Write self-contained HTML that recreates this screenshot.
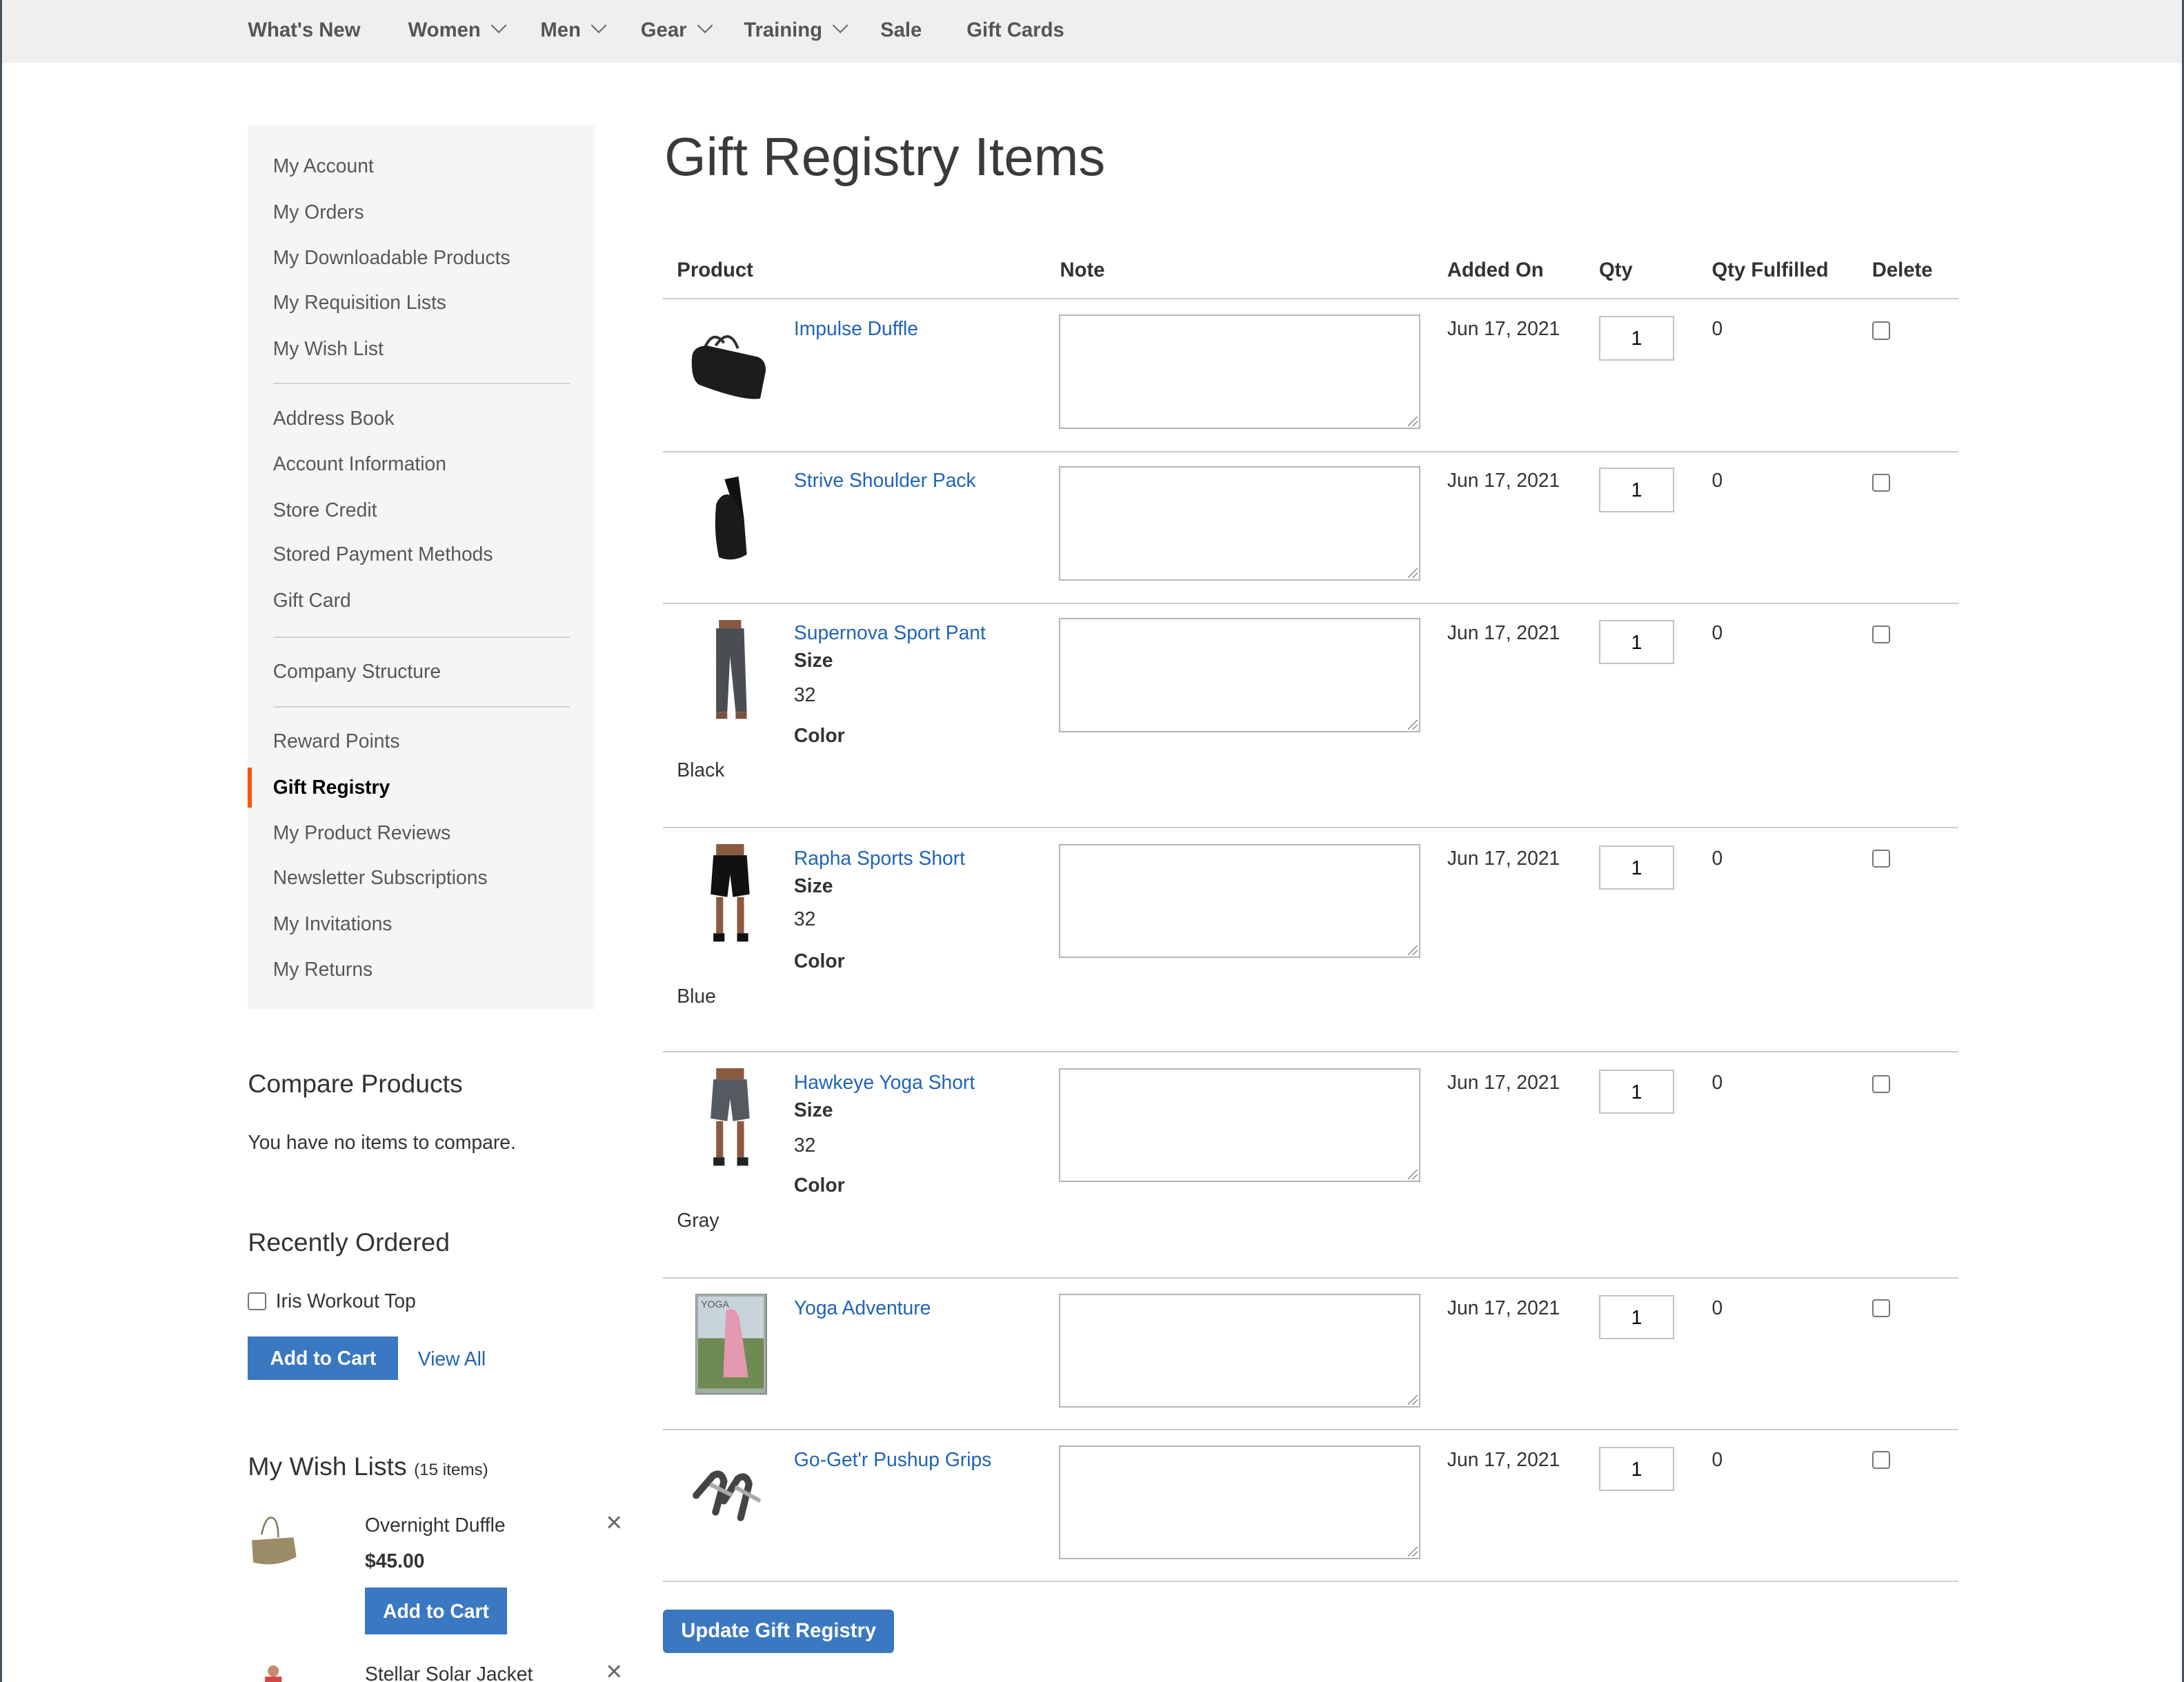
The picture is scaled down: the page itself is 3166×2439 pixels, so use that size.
<!DOCTYPE html>
<html><head><meta charset="utf-8">
<style>
html,body{margin:0;padding:0;background:#fff;overflow:hidden}
#w{position:relative;width:1568px;height:1208px;zoom:2.01913;font-family:"Liberation Sans",sans-serif;color:#333;font-size:14px}
.a{position:absolute;white-space:nowrap;line-height:18px}
.nav{position:absolute;left:0;top:0;width:1568px;height:45px;background:#efefef}
.ni{position:absolute;top:13px;font-weight:bold;color:#555;font-size:14.5px;line-height:18px}
.chev{display:inline-block;width:7px;height:7px;border-right:1.3px solid #666;border-bottom:1.3px solid #666;transform:rotate(45deg);margin-left:9px;position:relative;top:-4px}
.side{position:absolute;left:178px;top:90px;width:249px;height:635px;background:#f5f5f5}
.si{position:absolute;left:196px;color:#575757;font-size:14px;line-height:18px}
.div{position:absolute;left:196px;width:213px;height:1px;background:#d1d1d1}
.h2{position:absolute;left:178px;font-size:18.5px;font-weight:300;color:#333;line-height:24px}
.btn{position:absolute;background:#3a78c1;color:#fff;font-weight:bold;font-size:14px;text-align:center}
.link{color:#1f64b5}
.th{position:absolute;top:185px;font-weight:bold;font-size:14.5px;color:#333;line-height:18px}
.hr{position:absolute;left:476px;width:930px;height:1px;background:#ccc}
.ta{position:absolute;left:760px;width:258px;height:80px;border:1px solid #b4b4b4;background:#fff}
.ta:after{content:"";position:absolute;right:1px;bottom:1px;width:7px;height:7px;background:linear-gradient(135deg,transparent 45%,#888 46%,#888 52%,transparent 53%,transparent 70%,#888 71%,#888 77%,transparent 78%)}
.qty{position:absolute;left:1148px;width:52px;height:30px;border:1px solid #c2c2c2;text-align:center;line-height:30px;font-size:14px;color:#000}
.cb{position:absolute;width:11px;height:11px;border:1px solid #767676;border-radius:2px;background:#fff}
.b{font-weight:bold}
</style></head><body><div id="w">
<div style="position:absolute;left:0;top:0;width:1.5px;height:1208px;background:#45555f;z-index:5"></div>
<div style="position:absolute;right:0;top:0;width:1.5px;height:1208px;background:#45555f;z-index:5"></div>
<div class="nav">
<span class="ni" style="left:178px">What's New</span>
<span class="ni" style="left:293px">Women<i class="chev"></i></span>
<span class="ni" style="left:388px">Men<i class="chev"></i></span>
<span class="ni" style="left:460px">Gear<i class="chev"></i></span>
<span class="ni" style="left:534px">Training<i class="chev"></i></span>
<span class="ni" style="left:632px">Sale</span>
<span class="ni" style="left:694px">Gift Cards</span>
</div>

<div class="side"></div>
<div class="si" style="top:110px">My Account</div>
<div class="si" style="top:143px">My Orders</div>
<div class="si" style="top:176px">My Downloadable Products</div>
<div class="si" style="top:208px">My Requisition Lists</div>
<div class="si" style="top:241px">My Wish List</div>
<div class="div" style="top:275px"></div>
<div class="si" style="top:291px">Address Book</div>
<div class="si" style="top:324px">Account Information</div>
<div class="si" style="top:357px">Store Credit</div>
<div class="si" style="top:389px">Stored Payment Methods</div>
<div class="si" style="top:422px">Gift Card</div>
<div class="div" style="top:457px"></div>
<div class="si" style="top:473px">Company Structure</div>
<div class="div" style="top:507px"></div>
<div class="si" style="top:523px">Reward Points</div>
<div style="position:absolute;left:178px;top:551px;width:3px;height:29px;background:#ff5501"></div>
<div class="si b" style="top:556px;color:#000">Gift Registry</div>
<div class="si" style="top:589px">My Product Reviews</div>
<div class="si" style="top:621px">Newsletter Subscriptions</div>
<div class="si" style="top:654px">My Invitations</div>
<div class="si" style="top:687px">My Returns</div>

<div class="h2" style="top:766px">Compare Products</div>
<div class="a" style="left:178px;top:811px">You have no items to compare.</div>
<div class="h2" style="top:880px">Recently Ordered</div>
<div class="cb" style="left:178px;top:928px"></div>
<div class="a" style="left:198px;top:925px">Iris Workout Top</div>
<div class="btn" style="left:178px;top:960px;width:108px;height:31px;line-height:31px">Add to Cart</div>
<div class="a link" style="left:300px;top:967px">View All</div>
<div class="h2" style="top:1041px">My Wish Lists <span style="font-size:12px">(15 items)</span></div>
<svg style="position:absolute;left:178px;top:1088px" width="38" height="40"><path d="M10 14 Q13 0 18 2 Q22 4 22 16" fill="none" stroke="#8a7b60" stroke-width="1.3"/><path d="M3 18 L33 16 L35 30 Q20 38 4 34 Z" fill="#9c8c68"/></svg>
<div class="a" style="left:262px;top:1086px">Overnight Duffle</div>
<div class="a b" style="left:262px;top:1112px">$45.00</div>
<div class="btn" style="left:262px;top:1140px;width:102px;height:34px;line-height:34px">Add to Cart</div>
<div class="a" style="left:435px;top:1084px;font-size:20px;color:#666;font-weight:300">×</div>
<svg style="position:absolute;left:186px;top:1194px" width="20" height="14"><circle cx="10" cy="6" r="4" fill="#c98a70"/><rect x="4" y="10" width="12" height="6" fill="#d04848"/></svg>
<div class="a" style="left:262px;top:1193px">Stellar Solar Jacket</div>
<div class="a" style="left:435px;top:1191px;font-size:20px;color:#666;font-weight:300">×</div>

<div class="a" style="left:477px;top:89px;font-size:38.5px;line-height:48px;font-weight:300;color:#3a3a3a">Gift Registry Items</div>
<div class="th" style="left:486px">Product</div>
<div class="th" style="left:761px">Note</div>
<div class="th" style="left:1039px">Added On</div>
<div class="th" style="left:1148px">Qty</div>
<div class="th" style="left:1229px">Qty Fulfilled</div>
<div class="th" style="left:1344px">Delete</div>
<div class="hr" style="top:214px"></div>

<div class="hr" style="top:324px"></div>
<div class="hr" style="top:433px"></div>
<div class="hr" style="top:594px"></div>
<div class="hr" style="top:755px"></div>
<div class="hr" style="top:917px"></div>
<div class="hr" style="top:1026px"></div>
<div class="hr" style="top:1135px"></div>

<svg style="position:absolute;left:494px;top:236px" width="60" height="56"><path d="M12 14 Q18 0 26 10 M20 12 Q30 -2 36 14" fill="none" stroke="#333" stroke-width="2"/><path d="M3 20 Q4 12 14 12 L50 20 Q56 22 56 30 L52 50 Q40 52 8 40 Q2 36 3 20Z" fill="#1c1c1c"/></svg>
<div class="a link" style="left:570px;top:227px">Impulse Duffle</div>
<div class="ta" style="top:226px"></div>
<div class="a" style="left:1039px;top:227px">Jun 17, 2021</div>
<div class="qty" style="top:227px">1</div>
<div class="a" style="left:1229px;top:227px">0</div>
<div class="cb" style="left:1344px;top:231px"></div>

<svg style="position:absolute;left:506px;top:342px" width="40" height="62"><path d="M14 2 L24 0 L28 30 L24 32 Z" fill="#111"/><path d="M8 20 Q12 10 20 14 L28 30 L30 56 Q20 62 10 58 Q6 40 8 20Z" fill="#1a1a1a"/></svg>
<div class="a link" style="left:570px;top:336px">Strive Shoulder Pack</div>
<div class="ta" style="top:335px"></div>
<div class="a" style="left:1039px;top:336px">Jun 17, 2021</div>
<div class="qty" style="top:336px">1</div>
<div class="a" style="left:1229px;top:336px">0</div>
<div class="cb" style="left:1344px;top:340px"></div>

<svg style="position:absolute;left:508px;top:445px" width="34" height="74"><rect x="8" y="0" width="16" height="6" fill="#8a5a40"/><path d="M6 6 L26 6 L28 66 L20 66 L16 26 L14 66 L6 66 Z" fill="#4a4d52"/><rect x="6" y="66" width="8" height="5" fill="#7a5040"/><rect x="20" y="66" width="8" height="5" fill="#7a5040"/></svg>
<div class="a link" style="left:570px;top:445px">Supernova Sport Pant</div>
<div class="a b" style="left:570px;top:465px">Size</div>
<div class="a" style="left:570px;top:490px">32</div>
<div class="a b" style="left:570px;top:519px">Color</div>
<div class="a" style="left:486px;top:544px">Black</div>
<div class="ta" style="top:444px"></div>
<div class="a" style="left:1039px;top:445px">Jun 17, 2021</div>
<div class="qty" style="top:445px">1</div>
<div class="a" style="left:1229px;top:445px">0</div>
<div class="cb" style="left:1344px;top:449px"></div>

<svg style="position:absolute;left:504px;top:606px" width="40" height="74"><rect x="10" y="0" width="20" height="8" fill="#8a5a40"/><path d="M8 8 L32 8 L34 36 L22 38 L20 22 L18 38 L6 36 Z" fill="#111"/><rect x="10" y="38" width="5" height="26" fill="#8a5a40"/><rect x="25" y="38" width="5" height="26" fill="#8a5a40"/><rect x="8" y="64" width="8" height="6" fill="#111"/><rect x="25" y="64" width="8" height="6" fill="#111"/></svg>
<div class="a link" style="left:570px;top:607px">Rapha Sports Short</div>
<div class="a b" style="left:570px;top:627px">Size</div>
<div class="a" style="left:570px;top:651px">32</div>
<div class="a b" style="left:570px;top:681px">Color</div>
<div class="a" style="left:486px;top:706px">Blue</div>
<div class="ta" style="top:606px"></div>
<div class="a" style="left:1039px;top:607px">Jun 17, 2021</div>
<div class="qty" style="top:607px">1</div>
<div class="a" style="left:1229px;top:607px">0</div>
<div class="cb" style="left:1344px;top:610px"></div>

<svg style="position:absolute;left:504px;top:767px" width="40" height="74"><rect x="10" y="0" width="20" height="8" fill="#8a5a40"/><path d="M8 8 L32 8 L34 36 L22 38 L20 22 L18 38 L6 36 Z" fill="#555a60"/><rect x="10" y="38" width="5" height="26" fill="#8a5a40"/><rect x="25" y="38" width="5" height="26" fill="#8a5a40"/><rect x="8" y="64" width="8" height="6" fill="#222"/><rect x="25" y="64" width="8" height="6" fill="#222"/></svg>
<div class="a link" style="left:570px;top:768px">Hawkeye Yoga Short</div>
<div class="a b" style="left:570px;top:788px">Size</div>
<div class="a" style="left:570px;top:813px">32</div>
<div class="a b" style="left:570px;top:842px">Color</div>
<div class="a" style="left:486px;top:867px">Gray</div>
<div class="ta" style="top:767px"></div>
<div class="a" style="left:1039px;top:768px">Jun 17, 2021</div>
<div class="qty" style="top:768px">1</div>
<div class="a" style="left:1229px;top:768px">0</div>
<div class="cb" style="left:1344px;top:772px"></div>

<svg style="position:absolute;left:499px;top:929px" width="52" height="74"><rect x="0" y="0" width="51" height="72" fill="#9fb0a0" stroke="#888"/><rect x="2" y="2" width="47" height="30" fill="#c8d4dc"/><rect x="2" y="32" width="47" height="36" fill="#6f8a55"/><path d="M22 12 Q30 8 32 20 L38 60 L20 60 Z" fill="#e39ab0"/><text x="4" y="10" font-size="7" fill="#555" font-family="Liberation Sans">YOGA</text></svg>
<div class="a link" style="left:570px;top:930px">Yoga Adventure</div>
<div class="ta" style="top:929px"></div>
<div class="a" style="left:1039px;top:930px">Jun 17, 2021</div>
<div class="qty" style="top:930px">1</div>
<div class="a" style="left:1229px;top:930px">0</div>
<div class="cb" style="left:1344px;top:933px"></div>

<svg style="position:absolute;left:496px;top:1052px" width="58" height="44"><path d="M4 22 L16 8 Q22 4 24 12 L18 34 M24 26 L34 10 Q40 6 42 14 L36 38" fill="none" stroke="#444" stroke-width="5" stroke-linecap="round"/><path d="M14 14 L30 22 M32 16 L50 26" stroke="#aaa" stroke-width="3"/></svg>
<div class="a link" style="left:570px;top:1039px">Go-Get'r Pushup Grips</div>
<div class="ta" style="top:1038px"></div>
<div class="a" style="left:1039px;top:1039px">Jun 17, 2021</div>
<div class="qty" style="top:1039px">1</div>
<div class="a" style="left:1229px;top:1039px">0</div>
<div class="cb" style="left:1344px;top:1042px"></div>

<div class="btn" style="left:476px;top:1156px;width:166px;height:31px;line-height:31px;border-radius:3px;font-size:14.5px">Update Gift Registry</div>
</div></body></html>
